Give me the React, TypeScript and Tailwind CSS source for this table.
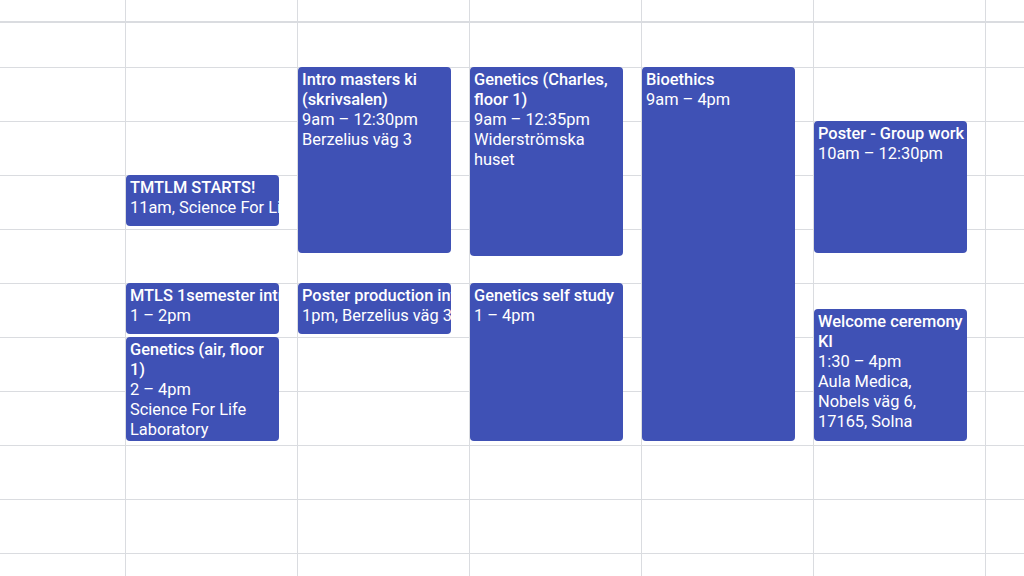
import React from "react";

type Ev = {
  top: number;
  height: number;
  title: string;
  lines: string[];
  compact?: boolean;
};

const columns: Ev[][] = [
  [
    { top: 152, height: 51, title: "TMTLM STARTS!", lines: ["11am, Science For Life Laboratory"], compact: true },
    { top: 260, height: 51, title: "MTLS 1semester introduction", lines: ["1 – 2pm"], compact: true },
    { top: 314, height: 104, title: "Genetics (air, floor 1)", lines: ["2 – 4pm", "Science For Life Laboratory"] },
  ],
  [
    { top: 44, height: 186, title: "Intro masters ki (skrivsalen)", lines: ["9am – 12:30pm", "Berzelius väg 3"] },
    { top: 260, height: 51, title: "Poster production intro", lines: ["1pm, Berzelius väg 3"], compact: true },
  ],
  [
    { top: 44, height: 189, title: "Genetics (Charles, floor 1)", lines: ["9am – 12:35pm", "Widerströmska huset"] },
    { top: 260, height: 158, title: "Genetics self study", lines: ["1 – 4pm"] },
  ],
  [{ top: 44, height: 374, title: "Bioethics", lines: ["9am – 4pm"] }],
  [
    { top: 98, height: 132, title: "Poster - Group work", lines: ["10am – 12:30pm"] },
    { top: 286, height: 132, title: "Welcome ceremony KI", lines: ["1:30 – 4pm", "Aula Medica, Nobels väg 6, 17165, Solna"] },
  ],
];

function Rows() {
  return (
    <>
      <div className="h-[45px] shrink-0 border-b border-[#dadce0]" />
      {Array.from({ length: 10 }).map((_, i) => (
        <div key={i} className="h-[54px] shrink-0 border-b border-[#dadce0]" />
      ))}
    </>
  );
}

function Event({ ev }: { ev: Ev }) {
  return (
    <div
      className="absolute left-0 w-[153px] overflow-hidden rounded-[4px] bg-[#3f51b5] pl-[4px] pt-[3px] text-[16.4px] leading-[20px] text-white"
      style={{ top: ev.top, height: ev.height }}
    >
      {ev.compact ? (
        <>
          <div className="whitespace-nowrap font-medium">{ev.title}</div>
          {ev.lines.map((l, i) => (
            <div key={i} className="whitespace-nowrap">{l}</div>
          ))}
        </>
      ) : (
        <>
          <div className="font-medium">{ev.title}</div>
          {ev.lines.map((l, i) => (
            <div key={i} className="pr-[3px]">{l}</div>
          ))}
        </>
      )}
    </div>
  );
}

export default function App() {
  return (
    <div
      className="h-[576px] w-[1024px] overflow-hidden bg-white"
      style={{ fontFamily: "Roboto, 'Noto Sans', Arial, sans-serif" }}
    >
      <div className="flex h-[23px] border-b-2 border-[#dadce0]">
        <div className="w-[125px] shrink-0" />
        {[0, 1, 2, 3, 4].map((i) => (
          <div key={i} className="w-[172px] shrink-0 border-l border-[#dadce0]" />
        ))}
        <div className="flex-1 border-l border-[#dadce0]" />
      </div>
      <div className="flex h-[553px] overflow-hidden">
        <div className="flex w-[125px] shrink-0 flex-col">
          <Rows />
        </div>
        {columns.map((evs, i) => (
          <div key={i} className="relative flex w-[172px] shrink-0 flex-col border-l border-[#dadce0]">
            <Rows />
            {evs.map((ev, j) => (
              <Event key={j} ev={ev} />
            ))}
          </div>
        ))}
        <div className="flex flex-1 flex-col border-l border-[#dadce0]">
          <Rows />
        </div>
      </div>
    </div>
  );
}
